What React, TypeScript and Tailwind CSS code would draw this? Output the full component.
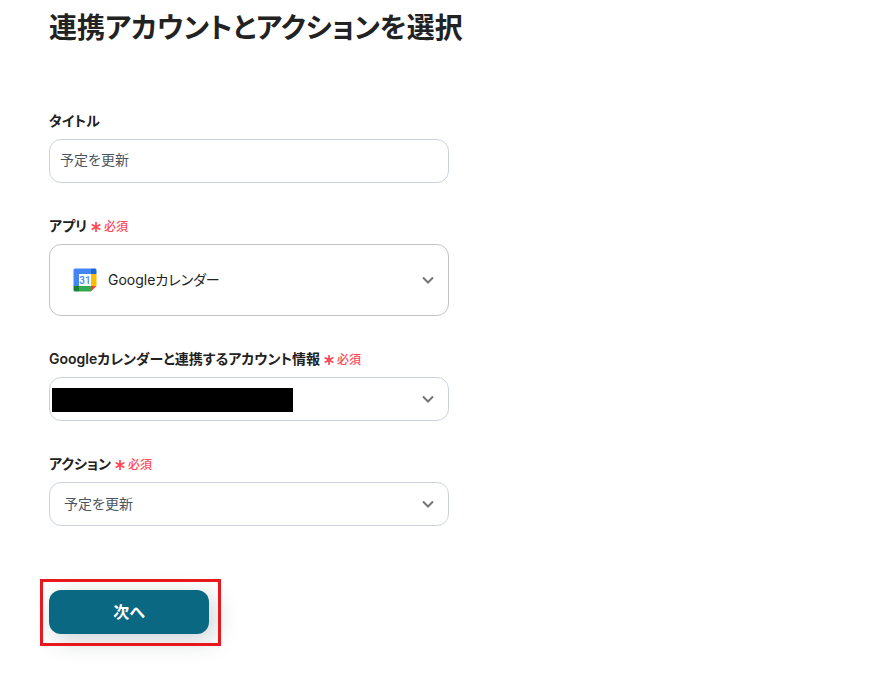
import React from 'react';
import { clsx } from 'clsx';

function CalendarIcon() {
  return (
    <svg viewBox="0 0 24 24" className="h-6 w-6" aria-hidden="true">
      <path fill="#fff" d="M5 5h14v14H5z" />
      <path fill="#4285f4" d="M2 .5h16V6H6v12H.5V2A1.500 1.500 0 0 1 2 .5z" />
      <path fill="#1967d2" d="M18 .5h4A1.500 1.500 0 0 1 23.500 2v4H18z" />
      <path fill="#fbbc04" d="M18 6h5.500v12H18z" />
      <path fill="#34a853" d="M6 18h12v5.500H6z" />
      <path fill="#188038" d="M.5 18H6v5.500H2A1.500 1.500 0 0 1 .5 22z" />
      <path fill="#ea4335" d="M18 18h5.500L18 23.500z" />
      <text
        x="12"
        y="15.500"
        textAnchor="middle"
        fontSize="10"
        className="fill-[#4285f4] font-['Roboto',sans-serif] font-medium"
      >
        31
      </text>
    </svg>
  );
}

function Chevron() {
  return (
    <svg
      viewBox="0 0 12 8"
      className="pointer-events-none absolute right-[15px] h-2 w-3"
      fill="none"
      stroke="#757575"
      strokeWidth="2"
      aria-hidden="true"
    >
      <path d="M1 1.500l5 5 5-5" />
    </svg>
  );
}

function RequiredMark() {
  return (
    <span className="flex items-center gap-[3px] pt-0.5 text-xs font-medium text-[#ff4757]">
      <svg viewBox="0 0 10 10" className="h-2.5 w-2.5" stroke="currentColor" strokeWidth="1.700" aria-hidden="true">
        <path d="M5 0v10M.7 2.500l8.600 5M9.300 2.500l-8.600 5" />
      </svg>
      必須
    </span>
  );
}

type FieldProps = {
  id: string;
  label: string;
  required?: boolean;
  children: React.ReactNode;
};

function Field({ id, label, required, children }: FieldProps) {
  return (
    <div className="flex flex-col gap-2">
      <label htmlFor={id} className="flex h-[21px] items-center gap-1 text-sm font-semibold">
        {label}
        {required && <RequiredMark />}
      </label>
      <div className="relative flex items-center">{children}</div>
    </div>
  );
}

const control = 'w-full appearance-none rounded-xl border bg-white text-sm';

export default function App() {
  return (
    <main className="px-[49px] pt-[7px] pb-10 font-['Inter','Noto_Sans_CJK_JP',sans-serif] text-[#222] [font-feature-settings:'palt']">
      <h1 className="text-[28px] leading-[42px] font-semibold">連携アカウントとアクションを選択</h1>

      <form className="mt-[61px] flex w-full max-w-[400px] flex-col gap-8">
        <Field id="title" label="タイトル">
          <input
            id="title"
            type="text"
            defaultValue="予定を更新"
            className={clsx(control, 'h-11 border-[#ccd2db] px-2.5 pb-1 text-[#4b555f]')}
          />
        </Field>

        <Field id="app" label="アプリ" required>
          <select id="app" className={clsx(control, 'h-[72px] border-[#c4c4c4] pr-10 pl-[58px]')}>
            <option>Googleカレンダー</option>
          </select>
          <span className="pointer-events-none absolute left-6">
            <CalendarIcon />
          </span>
          <Chevron />
        </Field>

        <Field id="account" label="Googleカレンダーと連携するアカウント情報" required>
          <select id="account" className={clsx(control, 'h-11 border-[#ccd2db] px-3.5')}>
            <option></option>
          </select>
          <span className="pointer-events-none absolute top-[11px] left-[3px] h-6 w-[241px] bg-black" />
          <Chevron />
        </Field>

        <Field id="action" label="アクション" required>
          <select id="action" className={clsx(control, 'h-11 border-[#ccd2db] px-3.5 text-[#4b555f]')}>
            <option>予定を更新</option>
          </select>
          <Chevron />
        </Field>

        <div className="relative mt-8 w-40">
          <button
            type="button"
            className="h-11 w-full rounded-xl bg-[#0b6883] font-bold text-white shadow-[6px_6px_24px_rgba(30,50,70,0.22)]"
          >
            次へ
          </button>
          <span className="pointer-events-none absolute -top-[11px] -right-3 -bottom-3 -left-[9px] border-3 border-[#e8191c]" />
        </div>
      </form>
    </main>
  );
}
